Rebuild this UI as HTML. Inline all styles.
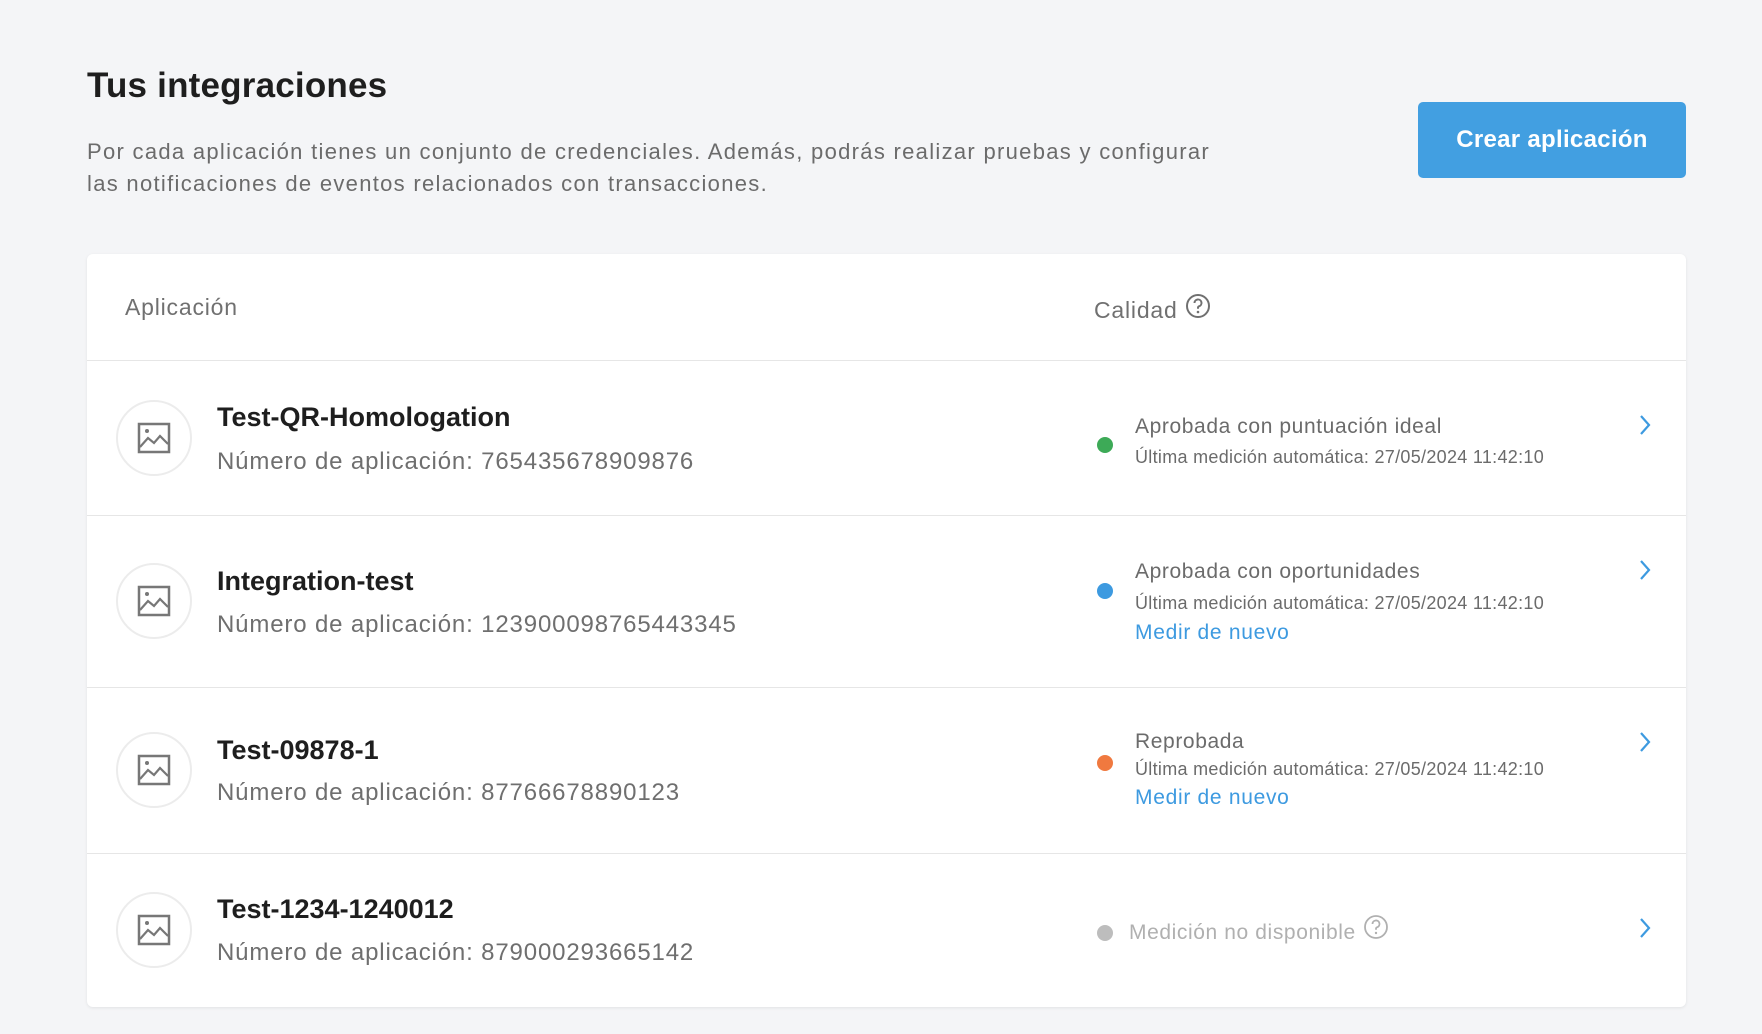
<!DOCTYPE html>
<html><head><meta charset="utf-8"><style>
*{margin:0;padding:0;box-sizing:border-box}
body{width:1762px;height:1034px;background:#f4f5f7;font-family:"Liberation Sans",sans-serif;position:relative;overflow:hidden;color:#222}
.a{position:absolute;white-space:nowrap;line-height:1}
h1{position:absolute;left:87px;top:66px;font-size:35px;font-weight:bold;color:#1e1e1e;letter-spacing:0.2px}
.desc{position:absolute;left:87px;top:136px;font-size:22px;line-height:32px;color:#6b6b6b;width:1400px;letter-spacing:1.3px}
.btn{position:absolute;left:1418px;top:102px;width:268px;height:76px;background:#429fe1;border-radius:5px;color:#fff;font-size:24px;display:flex;align-items:center;justify-content:center;font-weight:bold;letter-spacing:0.3px}
.card{position:absolute;left:87px;top:254px;width:1599px;height:753px;background:#fff;border-radius:6px;box-shadow:0 1px 3px rgba(0,0,0,.08)}
.line{position:absolute;left:87px;width:1599px;height:1px;background:#e6e6e6}
.hd{font-size:23px;color:#707070;letter-spacing:0.8px}
.ic{position:absolute;left:116px;width:76px;height:76px;border:2px solid #ececec;border-radius:50%;display:flex;align-items:center;justify-content:center}
.nm{font-size:27px;font-weight:bold;color:#1e1e1e;left:217px}
.num{font-size:24px;color:#6f6f6f;left:217px;letter-spacing:0.85px}
.dot{position:absolute;left:1097px;width:16px;height:16px;border-radius:50%}
.st{left:1135px;font-size:21px;color:#6b6b6b;letter-spacing:0.6px}
.sub{left:1135px;font-size:18px;color:#6b6b6b;letter-spacing:0.3px}
.lk{left:1135px;font-size:21px;color:#3d9ae0;letter-spacing:0.7px}
.ch{position:absolute;left:1638px}
</style></head><body>
<h1>Tus integraciones</h1>
<div class="desc">Por cada aplicación tienes un conjunto de credenciales. Además, podrás realizar pruebas y configurar<br>las notificaciones de eventos relacionados con transacciones.</div>
<div class="btn">Crear aplicación</div>
<div class="card"></div>
<div class="a hd" style="left:125px;top:296px">Aplicación</div>
<div class="a hd" style="left:1094px;top:299px">Calidad</div>
<svg class="a" style="left:1185px;top:293px" width="26" height="26" viewBox="0 0 26 26"><circle cx="13" cy="13" r="11" fill="none" stroke="#707070" stroke-width="2"/><path d="M9.5 10a3.5 3.5 0 1 1 4.5 3.3c-.7.3-1 .8-1 1.5v1" fill="none" stroke="#707070" stroke-width="2"/><circle cx="13" cy="19" r="1.3" fill="#707070"/></svg>
<div class="line" style="top:360px"></div>
<div class="line" style="top:515px"></div>
<div class="line" style="top:687px"></div>
<div class="line" style="top:853px"></div>

<div class="ic" style="top:400px"><svg width="34" height="32" viewBox="0 0 34 32"><rect x="2" y="2" width="30" height="28" fill="none" stroke="#777" stroke-width="2.5"/><circle cx="10" cy="9" r="2" fill="#777"/><path d="M3 25 L11 16 L17 21 L23 14 L31 22" fill="none" stroke="#777" stroke-width="2.2"/></svg></div>
<div class="ic" style="top:563px"><svg width="34" height="32" viewBox="0 0 34 32"><rect x="2" y="2" width="30" height="28" fill="none" stroke="#777" stroke-width="2.5"/><circle cx="10" cy="9" r="2" fill="#777"/><path d="M3 25 L11 16 L17 21 L23 14 L31 22" fill="none" stroke="#777" stroke-width="2.2"/></svg></div>
<div class="ic" style="top:732px"><svg width="34" height="32" viewBox="0 0 34 32"><rect x="2" y="2" width="30" height="28" fill="none" stroke="#777" stroke-width="2.5"/><circle cx="10" cy="9" r="2" fill="#777"/><path d="M3 25 L11 16 L17 21 L23 14 L31 22" fill="none" stroke="#777" stroke-width="2.2"/></svg></div>
<div class="ic" style="top:892px"><svg width="34" height="32" viewBox="0 0 34 32"><rect x="2" y="2" width="30" height="28" fill="none" stroke="#777" stroke-width="2.5"/><circle cx="10" cy="9" r="2" fill="#777"/><path d="M3 25 L11 16 L17 21 L23 14 L31 22" fill="none" stroke="#777" stroke-width="2.2"/></svg></div>

<div class="a nm" style="top:404px">Test-QR-Homologation</div>
<div class="a num" style="top:450px">Número de aplicación: 765435678909876</div>
<div class="a nm" style="top:568px">Integration-test</div>
<div class="a num" style="top:613px">Número de aplicación: 123900098765443345</div>
<div class="a nm" style="top:737px">Test-09878-1</div>
<div class="a num" style="top:781px">Número de aplicación: 87766678890123</div>
<div class="a nm" style="top:896px">Test-1234-1240012</div>
<div class="a num" style="top:941px">Número de aplicación: 879000293665142</div>

<div class="dot" style="top:437px;background:#3daa57"></div>
<div class="a st" style="top:416px">Aprobada con puntuación ideal</div>
<div class="a sub" style="top:448px">Última medición automática: 27/05/2024 11:42:10</div>

<div class="dot" style="top:583px;background:#3d9ae0"></div>
<div class="a st" style="top:561px">Aprobada con oportunidades</div>
<div class="a sub" style="top:594px">Última medición automática: 27/05/2024 11:42:10</div>
<div class="a lk" style="top:622px">Medir de nuevo</div>

<div class="dot" style="top:755px;background:#f0793f"></div>
<div class="a st" style="top:731px">Reprobada</div>
<div class="a sub" style="top:760px">Última medición automática: 27/05/2024 11:42:10</div>
<div class="a lk" style="top:787px">Medir de nuevo</div>

<div class="dot" style="top:925px;background:#bdbdbd"></div>
<div class="a st" style="top:922px;left:1129px;color:#b0b0b0">Medición no disponible</div>
<svg class="a" style="left:1363px;top:914px" width="26" height="26" viewBox="0 0 26 26"><circle cx="13" cy="13" r="11" fill="none" stroke="#b0b0b0" stroke-width="1.8"/><path d="M9.5 10a3.5 3.5 0 1 1 4.5 3.3c-.7.3-1 .8-1 1.5v1" fill="none" stroke="#b0b0b0" stroke-width="1.8"/><circle cx="13" cy="19" r="1.2" fill="#b0b0b0"/></svg>

<svg class="ch" style="top:414px" width="14" height="22" viewBox="0 0 14 22"><path d="M3 2 L11 11 L3 20" fill="none" stroke="#3d9ae0" stroke-width="2.2"/></svg>
<svg class="ch" style="top:559px" width="14" height="22" viewBox="0 0 14 22"><path d="M3 2 L11 11 L3 20" fill="none" stroke="#3d9ae0" stroke-width="2.2"/></svg>
<svg class="ch" style="top:731px" width="14" height="22" viewBox="0 0 14 22"><path d="M3 2 L11 11 L3 20" fill="none" stroke="#3d9ae0" stroke-width="2.2"/></svg>
<svg class="ch" style="top:917px" width="14" height="22" viewBox="0 0 14 22"><path d="M3 2 L11 11 L3 20" fill="none" stroke="#3d9ae0" stroke-width="2.2"/></svg>
</body></html>
